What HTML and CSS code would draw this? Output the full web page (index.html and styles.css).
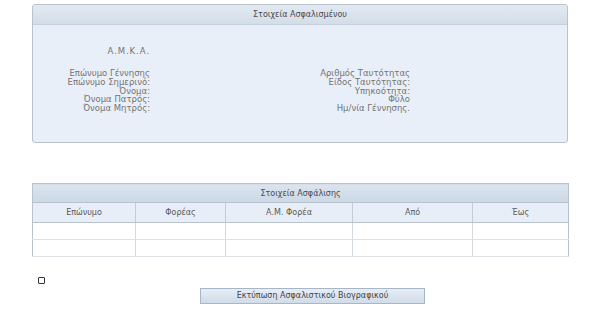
FILE: index.html
```html
<!DOCTYPE html>
<html lang="el">
<head>
<meta charset="utf-8">
<link rel="stylesheet" href="styles.css">
</head>
<body>
<div class="page">
  <div class="panel">
    <div class="panel-head">Στοιχεία Ασφαλισμένου</div>
    <div class="panel-body">
      <div class="amka"><span class="lbl-col">Α.Μ.Κ.Α.</span></div>
      <div class="fields">
        <div class="lbl-col">
          <div>Επώνυμο Γέννησης</div>
          <div>Επώνυμο Σημερινό:</div>
          <div>Όνομα:</div>
          <div>Όνομα Πατρός:</div>
          <div>Όνομα Μητρός:</div>
        </div>
        <div class="lbl-col right">
          <div>Αριθμός Ταυτότητας</div>
          <div>Είδος Ταυτότητας:</div>
          <div>Υπηκοότητα:</div>
          <div>Φύλο</div>
          <div>Ημ/νία Γέννησης.</div>
        </div>
      </div>
    </div>
  </div>

  <table class="grid">
    <colgroup>
      <col class="c1"><col class="c2"><col class="c3"><col class="c4"><col class="c5">
    </colgroup>
    <thead>
      <tr><th colspan="5" class="title">Στοιχεία Ασφάλισης</th></tr>
      <tr class="cols">
        <th>Επώνυμο</th>
        <th>Φορέας</th>
        <th>Α.Μ. Φορέα</th>
        <th>Από</th>
        <th>Έως</th>
      </tr>
    </thead>
    <tbody>
      <tr><td></td><td></td><td></td><td></td><td></td></tr>
      <tr><td></td><td></td><td></td><td></td><td></td></tr>
    </tbody>
  </table>

  <div class="check-row"><span class="checkbox"></span></div>
  <div class="btn-row"><button class="btn">Εκτύπωση Ασφαλιστικού Βιογραφικού</button></div>
</div>
</body>
</html>
```

FILE: styles.css
```css
html, body {
  margin: 0;
  padding: 0;
  background: #ffffff;
}
body {
  font-family: "DejaVu Sans", Verdana, sans-serif;
  font-size: 8.5px;
  color: #747474;
}
.page {
  width: 536px;
  padding: 4px 0 0 32px;
}
.panel {
  height: 137px;
  border: 1px solid #b9c3ce;
  border-radius: 3px;
  background: #e9eff8;
  overflow: hidden;
}
.panel-head {
  height: 19px;
  line-height: 19px;
  border-bottom: 1px solid #c6d0dc;
  background: linear-gradient(#e2e9f2, #d3dde9);
  text-align: center;
  color: #4a4a4a;
  font-size: 8px;
}
.panel-body {
  padding-top: 22px;
}
.amka {
  line-height: 9px;
  height: 9px;
  margin-bottom: 13px;
}
.lbl-col {
  display: block;
  width: 117px;
  text-align: right;
  line-height: 8.8px;
}
.amka .lbl-col {
  display: inline-block;
  letter-spacing: 0.9px;
}
.fields {
  display: flex;
}
.lbl-col.right {
  width: 260px;
}
.grid {
  margin-top: 40px;
  width: 536px;
  border-collapse: collapse;
  border: 1px solid #b9c3ce;
  table-layout: fixed;
}
.grid col.c1 { width: 103px; }
.grid col.c2 { width: 90px; }
.grid col.c3 { width: 127px; }
.grid col.c4 { width: 120px; }
.grid col.c5 { width: 96px; }
.grid th, .grid td {
  padding: 0;
  font-weight: normal;
  font-size: 8px;
}
.grid .title {
  height: 18px;
  background: linear-gradient(#dbe4ef, #ccd8e6);
  border-bottom: 1px solid #b9c3ce;
  color: #4a4a4a;
  text-align: center;
}
.grid .cols th {
  height: 19px;
  background: #e8eef7;
  border-right: 1px solid #c2ccd7;
  border-bottom: 1px solid #b9c3ce;
  color: #5a5a5a;
  text-align: center;
}
.grid td {
  height: 16px;
  border-right: 1px solid #d4d9df;
  border-bottom: 1px solid #dde1e6;
  background: #fff;
}
.grid tr > :last-child {
  border-right: none;
}
.check-row {
  height: 7px;
  margin-top: 20px;
  padding-left: 6px;
}
.checkbox {
  display: block;
  width: 5px;
  height: 5px;
  border: 1px solid #333;
  border-radius: 1px;
  background: #fff;
}
.btn-row {
  padding-left: 168px;
  margin-top: 4px;
}
.btn {
  width: 225px;
  height: 16px;
  padding: 0;
  border: 1px solid #a9b6c5;
  border-radius: 0;
  background: linear-gradient(#e6edf6, #d0dcea);
  font-family: "DejaVu Sans", Verdana, sans-serif;
  font-size: 8px;
  color: #444;
  line-height: 14px;
}
```
